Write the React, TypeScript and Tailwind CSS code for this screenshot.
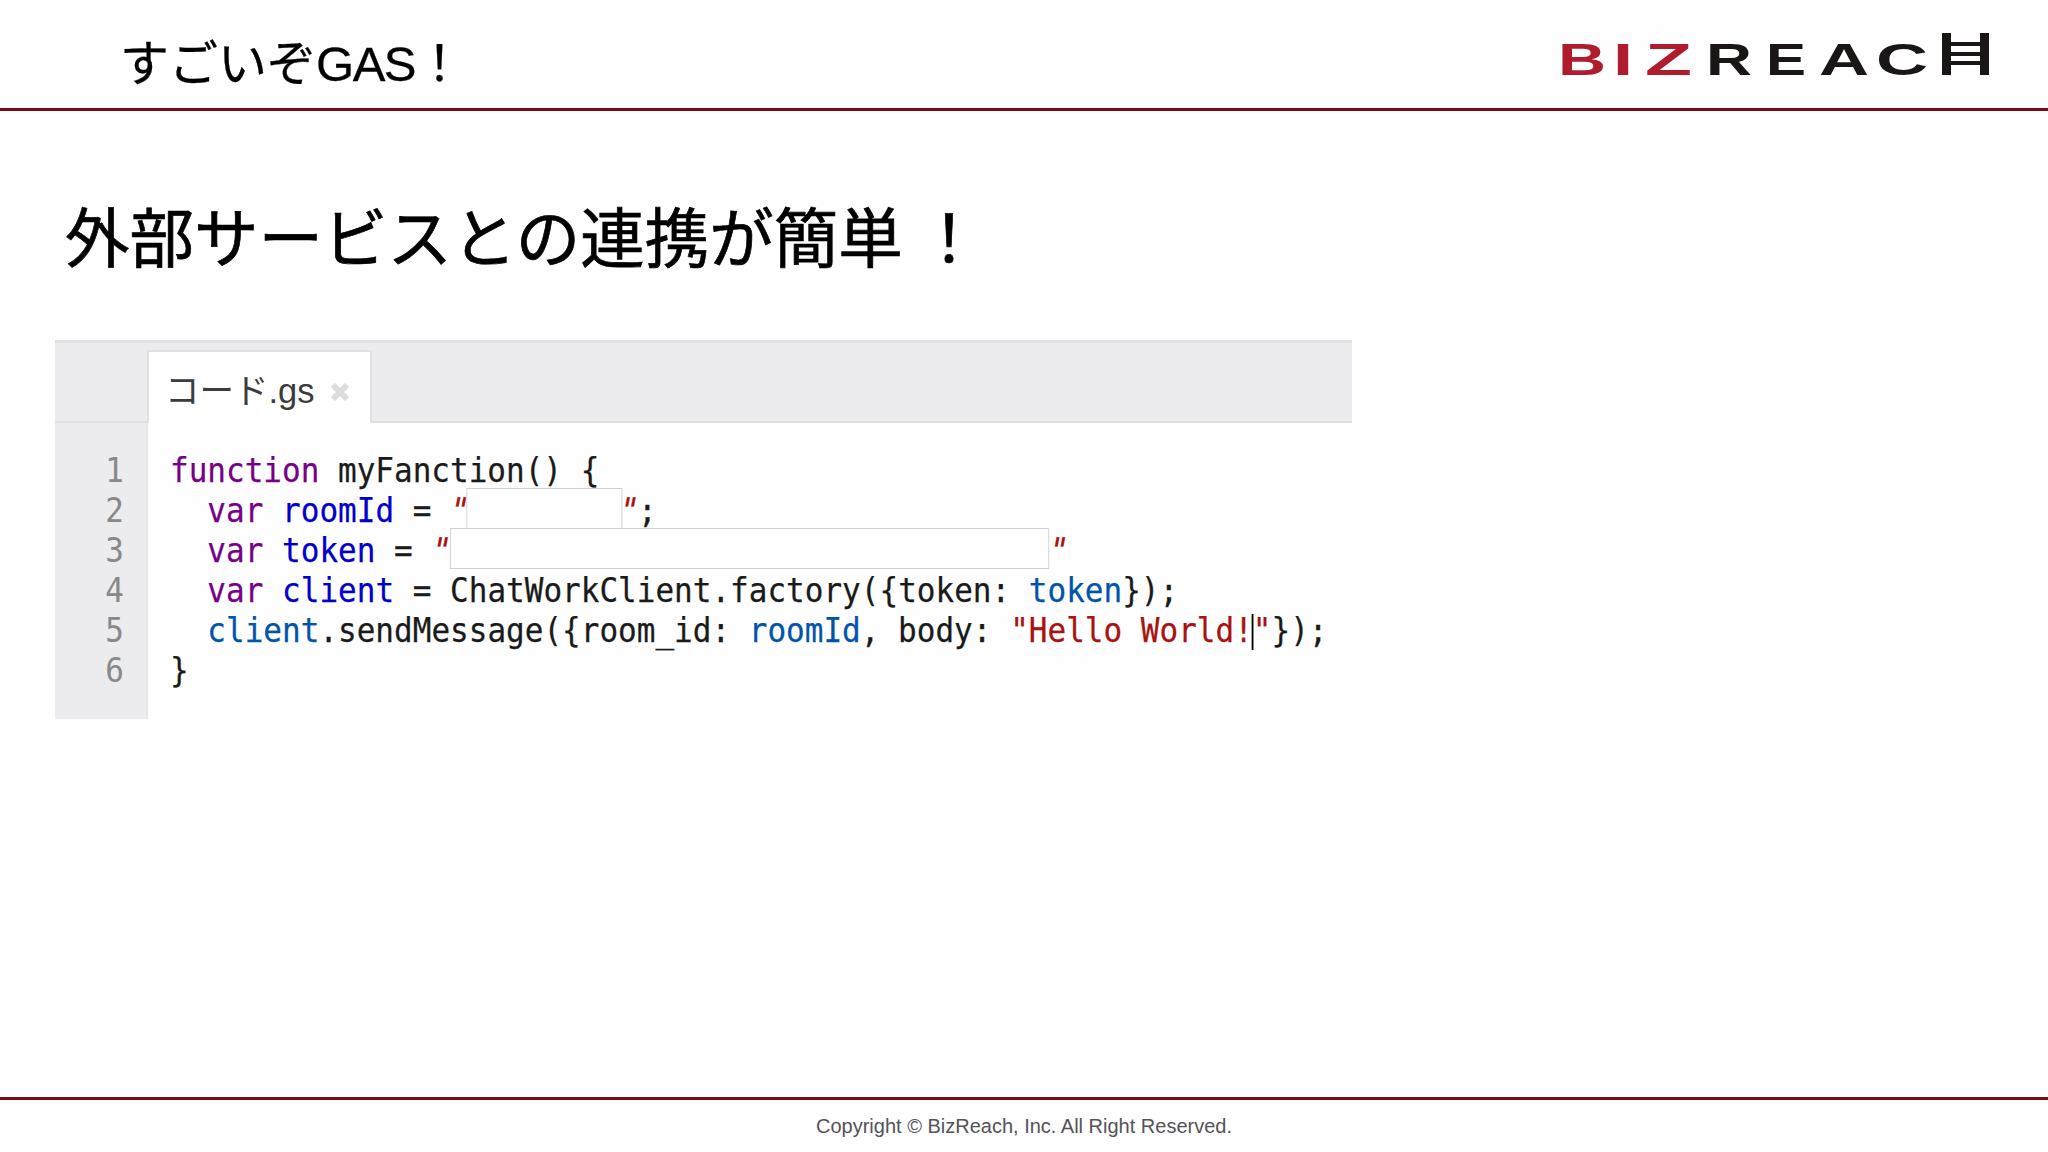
const cjk = "font-['Liberation_Sans','Noto_Sans_CJK_JP',sans-serif]";

function Logo() {
  const letters: [string, number, number, string][] = [
    ["B", 0, 48, "#b01c2e"],
    ["I", 55, 20, "#b01c2e"],
    ["Z", 87, 47, "#b01c2e"],
    ["R", 148, 46, "#1a1616"],
    ["E", 208, 40, "#1a1616"],
    ["A", 261, 50, "#1a1616"],
    ["C", 318, 52, "#1a1616"],
  ];
  return (
    <svg width="432" height="60" viewBox="0 0 432 60" className="block overflow-visible">
      {letters.map(([c, x, w, fill]) => (
        <text
          key={c}
          x={x}
          y={51}
          textLength={w}
          lengthAdjust="spacingAndGlyphs"
          fontFamily="Liberation Sans"
          fontWeight="700"
          fontSize="45"
          fill={fill}
        >
          {c}
        </text>
      ))}
      <g fill="#1a1616">
        <rect x="384" y="9" width="9" height="42" />
        <rect x="422" y="9" width="9" height="42" />
        <rect x="384" y="18" width="47" height="4" />
        <rect x="384" y="28" width="47" height="4" />
        <rect x="384" y="37" width="47" height="4" />
      </g>
    </svg>
  );
}

function Box({ w }: { w: string }) {
  return <span className={`inline-block ${w} h-[41px] -my-2 relative -top-[4px] align-middle bg-white border border-[#d0d0d4]`} />;
}

const V = "text-[#770088]";
const B = "text-[#0000cc]";
const L = "text-[#05a]";
const S = "text-[#aa1111]";
const Q = "text-[#aa1111] inline-block -skew-x-12";

export default function App() {
  return (
    <div className={`w-[2048px] h-[1152px] bg-[#fefefe] flex flex-col text-black overflow-hidden ${cjk}`}>
      <header className="h-[111px] shrink-0 border-b-[3px] border-[#7a0a12] flex items-center justify-between pl-[120px] pr-[58px]">
        <h1 className="text-[49px] leading-none font-normal pt-[20px] [-webkit-text-stroke:0.3px]">
          すごいぞ<span className="tracking-[-1.5px]">GAS</span>！
        </h1>
        <Logo />
      </header>

      <main className="flex-1 flex flex-col pl-[55px]">
        <h2 className="text-[64.5px] leading-none font-normal mt-[97px] ml-[10px] [-webkit-text-stroke:0.7px]">
          外部サービスとの連携が簡単<span className="ml-[14px]">！</span>
        </h2>

        <section className="mt-[67px] w-[1297px] flex flex-col">
          <div className="h-[83px] bg-[#ecebed] border-t-[3px] border-b-[2px] border-[#e0e0e2] flex items-end pl-[92px]">
            <div className="w-[225px] h-[73px] -mb-[2px] bg-white border-t-2 border-x-2 border-[#e0e0e2] rounded-t-[2px] flex items-center pl-[16px] pt-[10px] gap-[14px] text-[#3c3c3c] text-[34.5px]">
              <span>コード.gs</span>
              <svg width="22" height="22" viewBox="0 0 22 22" className="shrink-0">
                <path d="M4 4 L18 18 M18 4 L4 18" stroke="#dcdcde" strokeWidth="6" fill="none" />
              </svg>
            </div>
          </div>

          <div className="flex h-[296px]">
            <div className="w-[93px] shrink-0 bg-[#ecebed] border-r-2 border-[#e6e6e8] pt-[27px] pr-[22px] text-right font-['DejaVu_Sans_Mono',monospace] text-[34px] leading-[40px] text-[#888888]">
              {[1, 2, 3, 4, 5, 6].map((n) => (
                <div key={n} className="scale-x-[0.91] origin-right">{n}</div>
              ))}
            </div>
            <pre className="ml-[22px] pt-[27px] shrink-0 scale-x-[0.912] origin-left font-['DejaVu_Sans_Mono',monospace] text-[34px] leading-[40px] text-[#1a1a1a] [-webkit-text-stroke:0.25px]">
              <div><span className={V}>function</span> myFanction() {"{"}</div>
              <div>  <span className={V}>var</span> <span className={B}>roomId</span> = <span className={Q}>"</span><span className="-ml-[3px]"><Box w="w-[171px]" /></span><span className={`${Q} -ml-[3px]`}>"</span>;</div>
              <div>  <span className={V}>var</span> <span className={B}>token</span> = <span className={Q}>"</span><Box w="w-[657px]" /><span className={Q}>"</span></div>
              <div>  <span className={V}>var</span> <span className={B}>client</span> = ChatWorkClient.factory({"{"}token: <span className={L}>token</span>{"}"});</div>
              <div>  <span className={L}>client</span>.sendMessage({"{"}room_id: <span className={L}>roomId</span>, body: <span className={S}>"Hello World!<span className="inline-block w-[2px] h-[36px] -mx-px align-middle bg-black" />"</span>{"}"});</div>
              <div>{"}"}</div>
            </pre>
          </div>
        </section>
      </main>

      <footer className="h-[55px] shrink-0 border-t-[3px] border-[#7a0a12] flex items-center justify-center text-[20px] text-[#55525a]">
        Copyright © BizReach, Inc. All Right Reserved.
      </footer>
    </div>
  );
}
